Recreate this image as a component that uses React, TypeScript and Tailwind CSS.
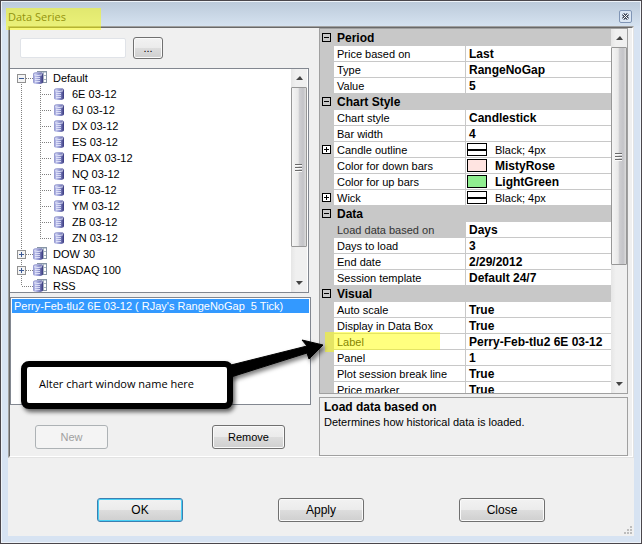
import React, { useState } from "react";

const instruments = ["6E 03-12", "6J 03-12", "DX 03-12", "ES 03-12", "FDAX 03-12", "NQ 03-12", "TF 03-12", "YM 03-12", "ZB 03-12", "ZN 03-12"];

type Item = { name: string; value: string; swatch?: "pen" | "rose" | "green"; expandable?: boolean; selected?: boolean; marked?: boolean };

const sections: { title: string; items: Item[] }[] = [
  {
    title: "Period",
    items: [
      { name: "Price based on", value: "Last" },
      { name: "Type", value: "RangeNoGap" },
      { name: "Value", value: "5" },
    ],
  },
  {
    title: "Chart Style",
    items: [
      { name: "Chart style", value: "Candlestick" },
      { name: "Bar width", value: "4" },
      { name: "Candle outline", value: "Black; 4px", swatch: "pen", expandable: true },
      { name: "Color for down bars", value: "MistyRose", swatch: "rose" },
      { name: "Color for up bars", value: "LightGreen", swatch: "green" },
      { name: "Wick", value: "Black; 4px", swatch: "pen", expandable: true },
    ],
  },
  {
    title: "Data",
    items: [
      { name: "Load data based on", value: "Days", selected: true },
      { name: "Days to load", value: "3" },
      { name: "End date", value: "2/29/2012" },
      { name: "Session template", value: "Default 24/7" },
    ],
  },
  {
    title: "Visual",
    items: [
      { name: "Auto scale", value: "True" },
      { name: "Display in Data Box", value: "True" },
      { name: "Label", value: "Perry-Feb-tlu2 6E 03-12", marked: true },
      { name: "Panel", value: "1" },
      { name: "Plot session break line", value: "True" },
      { name: "Price marker", value: "True" },
    ],
  },
];

const buttonFace =
  "rounded-[3px] border border-[#707070] bg-[linear-gradient(#f2f2f2,#ebebeb_50%,#dddddd_50%,#cfcfcf)] text-black shadow-[inset_0_0_0_1px_#fafafa]";

function Cylinder() {
  return (
    <g>
      <path d="M0 4q0-2 5-2t5 2v8q0 2-5 2t-5-2z" fill="url(#drum)" />
      <path d="M0.5 4.2q0-1.7 4.5-1.7t4.5 1.7" stroke="#a9acd6" fill="none" />
      <path d="M1 4.8q4 1.4 8 0" stroke="#e4e6fa" fill="none" />
      <path d="M2 7.5h5M2 9.5h5M2 11.5h5" stroke="#e6e8fb" strokeOpacity="0.85" fill="none" />
    </g>
  );
}

function DrumGradient() {
  return (
    <defs>
      <linearGradient id="drum">
        <stop offset="0" stopColor="#8f93cc" />
        <stop offset="0.25" stopColor="#c0c4ec" />
        <stop offset="0.6" stopColor="#8a8fcb" />
        <stop offset="1" stopColor="#37377c" />
      </linearGradient>
    </defs>
  );
}

function GroupIcon() {
  return (
    <svg width="15" height="16" viewBox="0 0 15 16" className="shrink-0" aria-hidden="true">
      <DrumGradient />
      <rect x="4.5" y="1.5" width="9" height="11" fill="#fff" stroke="#8795a6" />
      <path d="M5 2.5h8" stroke="#c5d2de" />
      <path d="M10.5 2v10M5 5.5h8M5 9.5h8" stroke="#a5b1be" />
      <Cylinder />
    </svg>
  );
}

function SeriesIcon() {
  return (
    <svg width="11" height="16" viewBox="0 0 11 16" className="shrink-0" aria-hidden="true">
      <DrumGradient />
      <Cylinder />
    </svg>
  );
}

function Group({ label, mark, first, last }: { label: string; mark?: "+" | "-"; first?: boolean; last?: boolean }) {
  return (
    <div role="treeitem" className="flex h-4 items-center">
      <svg width="23" height="16" className="shrink-0" aria-hidden="true" shapeRendering="crispEdges">
        <path d={first ? "M11.5 8V16" : last ? "M11.5 0V8" : "M11.5 0V16"} stroke="#808080" strokeDasharray="1 1" />
        <path d="M12 8.5H23" stroke="#808080" strokeDasharray="1 1" />
        {mark && (
          <g>
            <rect x="7.5" y="4.5" width="8" height="8" fill="#f4f4f4" stroke="#919191" />
            <path d={mark === "+" ? "M9 8.5h5M11.5 6v5" : "M9 8.5h5"} stroke="#3c5a96" />
          </g>
        )}
      </svg>
      <GroupIcon />
      <span className="pl-[5px] leading-4">{label}</span>
    </div>
  );
}

function Series({ label, last }: { label: string; last: boolean }) {
  return (
    <div role="treeitem" className="flex h-4 items-center">
      <svg width="44" height="16" className="shrink-0" aria-hidden="true" shapeRendering="crispEdges">
        <path d={last ? "M11.5 0V16M30.5 0V8" : "M11.5 0V16M30.5 0V16"} stroke="#808080" strokeDasharray="1 1" />
        <path d="M30 8.5H42" stroke="#808080" strokeDasharray="1 1" />
      </svg>
      <SeriesIcon />
      <span className="pl-[7px] leading-4">{label}</span>
    </div>
  );
}

function ScrollBar({ thumb }: { thumb: string }) {
  return (
    <div className="flex w-4 shrink-0 flex-col bg-[linear-gradient(90deg,#e6e6e6,#f0f0f0_30%,#f0f0f0)]" aria-hidden="true">
      <svg width="16" height="18" className="shrink-0">
        <path d="M5 11l4-4 3 4z" fill="#444" />
      </svg>
      <div className={`${thumb} flex items-center justify-center rounded-[1px] border border-[#979797] bg-[linear-gradient(90deg,#f5f5f5,#e8e8e8_45%,#cfcfd2_50%,#c4c4c8_80%,#dcdcdc)]`}>
        <svg width="8" height="9">
          <path d="M0 1.5h7M0 4.5h7M0 7.5h7" stroke="#6a6a6a" />
          <path d="M0 2.5h7M0 5.5h7M0 8.5h7" stroke="#fafafa" />
        </svg>
      </div>
      <div className="flex-1" />
      <svg width="16" height="17" className="shrink-0">
        <path d="M5 6h7l-4 4z" fill="#444" />
      </svg>
    </div>
  );
}

function ExpandBox({ open }: { open: boolean }) {
  return (
    <svg width="9" height="9" className="ml-[2px] block" aria-hidden="true" shapeRendering="crispEdges">
      <rect x="0.5" y="0.5" width="8" height="8" fill={open ? "none" : "#fff"} stroke="#000" />
      <path d={open ? "M2 4.5h5" : "M2 4.5h5M4.5 2v5"} stroke="#000" />
    </svg>
  );
}

function Swatch({ kind }: { kind: "pen" | "rose" | "green" }) {
  const fill = kind === "pen" ? "bg-white" : kind === "rose" ? "bg-[#ffe4e1]" : "bg-[#90ee90]";
  return (
    <span className={`flex h-[13px] w-5 shrink-0 items-center border border-black ${fill}`}>
      {kind === "pen" && <span className="h-[2px] w-full bg-black" />}
    </span>
  );
}

function PropertyRow({ item }: { item: Item }) {
  return (
    <tr className="h-4">
      <td className="bg-[#c8c8c8] p-0 pb-[2px]">{item.expandable && <ExpandBox open={false} />}</td>
      <th
        scope="row"
        className={`relative border-r border-b border-[#c8c8c8] p-0 pl-[3px] text-left font-normal whitespace-nowrap ${item.selected ? "bg-[#c8c8c8] text-[#333]" : "bg-white"}`}
      >
        <span className="block h-[15px] leading-4">{item.name}</span>
        {item.marked && <span className="absolute -top-[2px] right-[25px] -left-[9px] h-5 bg-[#ffff00]/50" />}
      </th>
      <td className="border-b border-[#c8c8c8] bg-white p-0">
        <span className={`flex h-[15px] items-center whitespace-nowrap leading-4 ${item.swatch ? "gap-2 pl-px" : "pl-[3px]"}`}>
          {item.swatch && <Swatch kind={item.swatch} />}
          <span className={item.swatch === "pen" ? "" : "text-[12px] font-bold"}>{item.value}</span>
        </span>
      </td>
    </tr>
  );
}

function Callout() {
  return (
    <div className="absolute top-[63px] left-[10px] z-20 w-[212px]">
      <svg width="110" height="60" className="absolute -top-[26px] left-[200px] drop-shadow-[2px_3px_2px_rgba(0,0,0,0.5)]" aria-hidden="true">
        <path d="M6 31L86 11L81 5L102 10L88 24L86 18L10 42z" fill="#000" stroke="#000" strokeLinejoin="round" />
      </svg>
      <div className="relative flex h-12 items-center rounded-lg border-[6px] border-black bg-white pl-3 shadow-[2px_3px_4px_rgba(0,0,0,0.6)]">
        <span className="pb-[3px] font-['Open_Sans',sans-serif] text-[11px] leading-4 whitespace-nowrap text-black">Alter chart window name here</span>
      </div>
    </div>
  );
}

export default function App() {
  const [filter, setFilter] = useState("");

  return (
    <div className="flex min-h-screen flex-col border border-[#4a464b] bg-[#d7e3f2] px-[7px] pb-[7px] font-['Liberation_Sans',Arial,sans-serif] text-[11px] text-black shadow-[inset_0_0_0_1px_#eef3f9]">
      <header className="-mx-[6px] mt-px flex h-6 items-center justify-between bg-[linear-gradient(#bccada,#d5e2f0)] pr-[5px] pl-[4px]">
        <h1 className="relative z-10 mt-[6px] w-[95px] pl-[2px] font-['Open_Sans',sans-serif] text-[11px] leading-4 font-normal text-[#222]">
          Data Series
          <span className="absolute -top-px left-0 h-[22px] w-full bg-[#ffff00]/50" />
        </h1>
        <button type="button" aria-label="Close window" className="mt-1 mr-[3px] flex h-[13px] w-[13px] items-center justify-center rounded-[2px] border border-[#8095b5] bg-[#dbe6f3]">
          <svg width="9" height="9" aria-hidden="true">
            <path d="M2 2l5 5M7 2l-5 5" stroke="#3d4656" strokeWidth="3" />
            <path d="M2 2l5 5M7 2l-5 5" stroke="#fff" strokeWidth="1" />
          </svg>
        </button>
      </header>

      <main className="flex grow flex-col bg-[#f0f0f0]">
        <div className="border border-[#e3e3e3] border-t-[#a0a0a0] border-l-[#a0a0a0]">
          <div className="grid grid-cols-[301fr_309fr] gap-2 border border-white border-t-[#696969] border-l-[#696969] pr-1">
            <section className="flex min-w-0 flex-col">
              <div className="flex h-10 items-center gap-[7px] pl-[10px]">
                <input
                  aria-label="Instrument"
                  value={filter}
                  onChange={(e) => setFilter(e.target.value)}
                  className="h-5 w-[106px] rounded-[2px] border border-[#e0e3e8] bg-white px-1 outline-none"
                />
                <button type="button" className={`h-[22px] w-[30px] ${buttonFace}`}>...</button>
              </div>

              <div className="mr-[2px] flex h-[225px] overflow-hidden border border-l-0 border-[#828790] bg-white pr-px">
                <div role="tree" className="min-w-0 grow overflow-hidden pt-px">
                  <Group label="Default" mark="-" first />
                  {instruments.map((name, i) => (
                    <Series key={name} label={name} last={i === instruments.length - 1} />
                  ))}
                  <Group label="DOW 30" mark="+" />
                  <Group label="NASDAQ 100" mark="+" />
                  <Group label="RSS" last />
                </div>
                <ScrollBar thumb="h-[160px]" />
              </div>

              <div className="relative mt-1 h-[108px] border border-[#828790] bg-white p-px">
                <div role="listbox" aria-label="Data series">
                  <div role="option" aria-selected="true" className="h-[14px] overflow-hidden bg-[#3399ff] pl-[2px] leading-[14px] whitespace-pre text-white">
                    {"Perry-Feb-tlu2 6E 03-12 ( RJay's RangeNoGap  5 Tick)"}
                  </div>
                </div>
                <Callout />
              </div>

              <div className="flex justify-between py-5 pr-[26px] pb-[7px] pl-[25px]">
                <button type="button" disabled className="h-6 w-[73px] rounded-[3px] border border-[#adb2b5] bg-[#f4f4f4] text-[#a0a0a0]">New</button>
                <button type="button" className={`h-6 w-[73px] ${buttonFace}`}>Remove</button>
              </div>
            </section>

            <section className="flex min-w-0 flex-col gap-[3px]">
              <div className="flex h-[366px] overflow-hidden border border-[#a0a0a0] bg-[#c8c8c8]">
                <div className="min-w-0 grow overflow-hidden pt-px">
                  <table className="w-full table-fixed border-separate border-spacing-0">
                    <colgroup>
                      <col className="w-[14px]" />
                      <col className="w-[132px]" />
                      <col />
                    </colgroup>
                    {sections.map((section) => (
                      <tbody key={section.title}>
                        <tr className="h-4 bg-[#c8c8c8]">
                          <td className="p-0 pb-[2px]"><ExpandBox open /></td>
                          <th colSpan={2} className="p-0 pl-[3px] text-left text-[12px] font-bold">
                            <span className="block h-4 leading-4">{section.title}</span>
                          </th>
                        </tr>
                        {section.items.map((item) => (
                          <PropertyRow key={item.name} item={item} />
                        ))}
                      </tbody>
                    ))}
                  </table>
                </div>
                <ScrollBar thumb="h-[218px]" />
              </div>

              <div className="grow border border-[#a0a0a0] pt-[2px] pl-1 leading-[15px]">
                <h2 className="text-[12px] font-bold">Load data based on</h2>
                <p>Determines how historical data is loaded.</p>
              </div>
            </section>
          </div>
        </div>

        <footer className="relative flex grow justify-between px-[89px] pt-10 pb-[14px]">
          <button type="button" className="h-6 w-[86px] rounded-[3px] border border-[#3c7fb1] bg-[linear-gradient(#f2f2f2,#ebebeb_50%,#dddddd_50%,#cfcfcf)] text-[12px] text-black shadow-[inset_0_0_0_1px_#48d0f5]">OK</button>
          <button type="button" className={`h-6 w-[86px] text-[12px] ${buttonFace}`}>Apply</button>
          <button type="button" className={`h-6 w-[86px] text-[12px] ${buttonFace}`}>Close</button>
          <svg width="8" height="8" className="absolute right-[2px] bottom-[2px]" aria-hidden="true">
            <path d="M6 0h2v2h-2zM3 3h2v2h-2zM6 3h2v2h-2zM0 6h2v2h-2zM3 6h2v2h-2zM6 6h2v2h-2z" fill="#bdbdbd" />
          </svg>
        </footer>
      </main>
    </div>
  );
}
